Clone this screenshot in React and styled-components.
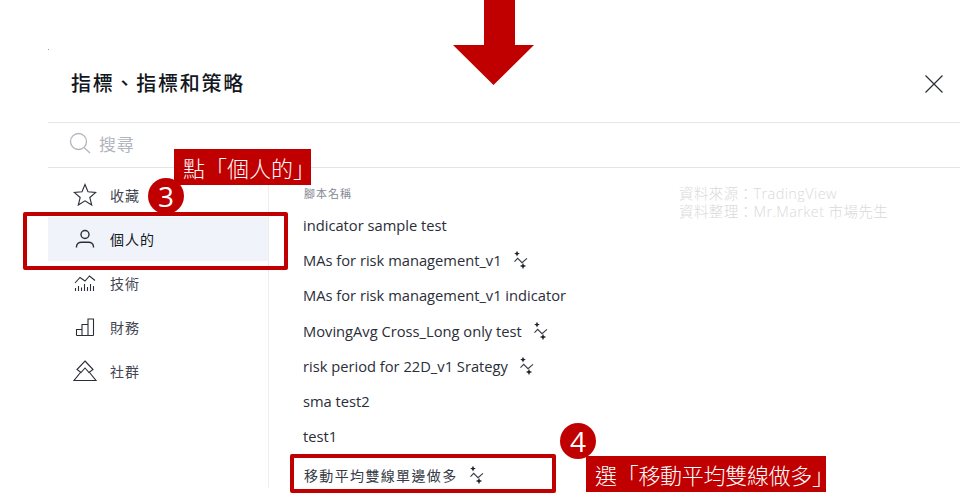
import React from "react";
import styled, { createGlobalStyle } from "styled-components";

const Global = createGlobalStyle`
  html, body { margin: 0; padding: 0; background: #fff; }
  #root { width: 960px; height: 502px; overflow: hidden; }
`;

const CJK = `"Noto Sans CJK TC", "Noto Sans", sans-serif`;
const RED = "#c00000";

const Page = styled.div`
  position: relative;
  width: 960px;
  height: 502px;
  background: #fff;
  padding: 50px 0 14px 48px;
  box-sizing: border-box;
  overflow: hidden;
  font-family: ${CJK};
`;
const Dialog = styled.div`
  height: 100%;
  display: flex;
  flex-direction: column;
`;
const Header = styled.header`
  flex: 0 0 73px;
  box-sizing: border-box;
  border-bottom: 1px solid #e3e5ea;
  display: flex;
  align-items: center;
  justify-content: space-between;
  padding: 0 16px 7px 23px;
`;
const Title = styled.h1`
  margin: 0;
  font: 500 20px ${CJK};
  letter-spacing: 1.75px;
  color: #131722;
`;
const Close = styled.svg`
  width: 20px;
  height: 20px;
  display: block;
  margin-top: 3px;
`;
const SearchBar = styled.div`
  flex: 0 0 45px;
  box-sizing: border-box;
  border-bottom: 1px solid #e3e5ea;
  display: flex;
  align-items: center;
  gap: 8px;
  padding: 0 0 4px 21px;
`;
const SearchText = styled.span`
  font: 400 17px ${CJK};
  letter-spacing: 0.7px;
  color: #b2b5be;
`;
const Body = styled.div`
  flex: 1;
  display: flex;
  min-height: 0;
`;
const Sidebar = styled.nav`
  flex: 0 0 221px;
  box-sizing: border-box;
  border-right: 1px solid #eceef2;
  padding-top: 5px;
`;
const NavItem = styled.div`
  height: 44px;
  display: flex;
  align-items: center;
  gap: 13px;
  padding-left: 25px;
  background: ${(p) => (p.$active ? "#f0f3fa" : "transparent")};
  color: ${(p) => (p.$active ? "#131722" : "#434651")};
  font: 400 14px ${CJK};
  letter-spacing: 1px;
`;
const NavIcon = styled.svg`
  width: 24px;
  height: 24px;
  flex: none;
  fill: none;
  stroke: #2a2e39;
  stroke-width: 1.1;
`;
const List = styled.section`
  flex: 1;
  padding: 17px 0 0 34px;
`;
const ListHead = styled.div`
  height: 22px;
  font: 400 11px ${CJK};
  letter-spacing: 1px;
  color: #868993;
  margin-left: 1px;
`;
const Row = styled.div`
  height: 35.3px;
  display: flex;
  align-items: center;
  gap: 11px;
  font: 400 14.7px "Open Sans", ${CJK};
  color: #2a2e39;
`;
const CjkRow = styled(Row)`
  margin-top: 3.5px;
  margin-left: 1px;
  font: 400 14px ${CJK};
  letter-spacing: 1.35px;
  color: #363a45;
`;
const Spark = styled.svg`
  width: 16px;
  height: 20px;
  flex: none;
`;
const Watermark = styled.div`
  position: absolute;
  left: 679px;
  top: 185px;
  color: #dadada;
`;
const WatermarkLine = styled.div`
  height: 17.5px;
  font: 300 14.5px/17.5px "Open Sans", "Noto Sans CJK TC", sans-serif;
  letter-spacing: 0.4px;
  white-space: nowrap;
`;
const Arrow = styled.svg`
  position: absolute;
  left: 453px;
  top: 0;
  width: 81px;
  height: 86px;
`;
const Label = styled.div`
  position: absolute;
  left: ${(p) => p.$x}px;
  top: ${(p) => p.$y}px;
  width: ${(p) => p.$w}px;
  height: 36px;
  box-sizing: border-box;
  padding-left: 9px;
  display: flex;
  align-items: center;
  background: ${RED};
  color: #fff;
  font: 300 22px "Noto Sans CJK TC", sans-serif;
  letter-spacing: ${(p) => p.$tight}px;
  white-space: nowrap;
`;
const Badge = styled.div`
  position: absolute;
  left: ${(p) => p.$x}px;
  top: ${(p) => p.$y}px;
  width: 36px;
  height: 36px;
  border-radius: 50%;
  background: ${RED};
  color: #fff;
  display: flex;
  align-items: center;
  justify-content: center;
  font: 400 28px "Open Sans", sans-serif;
`;
const Frame = styled.div`
  position: absolute;
  left: ${(p) => p.$x}px;
  top: ${(p) => p.$y}px;
  width: ${(p) => p.$w}px;
  height: ${(p) => p.$h}px;
  box-sizing: border-box;
  border: 4px solid ${RED};
  border-radius: 2px;
`;
const Speck = styled.i`
  position: absolute;
  left: 48px;
  top: 49px;
  width: 1px;
  height: 1px;
  background: #9a9a9a;
`;

const Sparkle = () => (
  <Spark viewBox="0 0 16 20">
    <path d="M4 .8 4.900 2.700 6.800 3.600 4.900 4.500 4 6.400 3.100 4.500 1.200 3.600 3.100 2.700Z" fill="#1e222d" />
    <path d="M1.500 11.700 4.700 8.300 9 12.700 14 8.300" fill="none" stroke="#363a45" strokeWidth="1.1" />
    <path d="M10 12.800 10.900 15.100 13.200 16 10.900 16.900 10 19.200 9.100 16.900 6.800 16 9.100 15.100Z" fill="#1e222d" />
  </Spark>
);

const icons = {
  star: <path d="M12 1.500 15 8.800 22.800 9.400 16.800 14.500 18.700 22 12 17.900 5.300 22 7.200 14.500 1.200 9.400 9 8.800Z" />,
  user: (
    <>
      <circle cx="12" cy="7.500" r="4" strokeWidth="1.4" />
      <path d="M3.500 20.500v-.8c0-2.800 2.500-4.500 5-4.500h7c2.500 0 5 1.700 5 4.500v.8" strokeWidth="1.4" />
    </>
  ),
  tech: (
    <path d="M2 12 7 6.500 12 10 16.500 5 22 9.500M2.500 20v-3M5.500 20v-5M8.500 20v-3.500M11.500 20v-7M14.500 20v-4M17.500 20v-7M20.500 20v-5" />
  ),
  fin: <path d="M3.500 20.500h17M3.500 20.500v-6h5.500v6M9 20.500V9.500h6v11M15 20.500V4h5.500v16.500" />,
  social: (
    <path d="M12 2 20 10.500 16 13.500 12 9 8 13.500 4 10.500ZM7.500 13.500 1 21.500h22L16.500 13.500" />
  ),
};

const nav = [
  ["star", "收藏"],
  ["user", "個人的", true],
  ["tech", "技術"],
  ["fin", "財務"],
  ["social", "社群"],
];
const rows = [
  ["indicator sample test"],
  ["MAs for risk management_v1", true],
  ["MAs for risk management_v1 indicator"],
  ["MovingAvg Cross_Long only test", true],
  ["risk period for 22D_v1 Srategy", true],
  ["sma test2"],
  ["test1"],
];

export default function App() {
  return (
    <Page>
      <Global />
      <Dialog>
        <Header>
          <Title>指標、指標和策略</Title>
          <Close viewBox="0 0 20 20">
            <path d="M1.500 1.500 18.500 18.500M18.500 1.500 1.500 18.500" stroke="#2a2e39" strokeWidth="1.2" fill="none" />
          </Close>
        </Header>
        <SearchBar>
          <svg width="22" height="22" viewBox="0 0 22 22" fill="none" stroke="#b2b5be" strokeWidth="1.300">
            <circle cx="9.500" cy="9.500" r="8" />
            <path d="M15 15.500 21 21" />
          </svg>
          <SearchText>搜尋</SearchText>
        </SearchBar>
        <Body>
          <Sidebar>
            {nav.map(([icon, text, active]) => (
              <NavItem key={text} $active={active}>
                <NavIcon viewBox="0 0 24 24">{icons[icon]}</NavIcon>
                {text}
              </NavItem>
            ))}
          </Sidebar>
          <List>
            <ListHead>腳本名稱</ListHead>
            {rows.map(([text, spark]) => (
              <Row key={text}>
                {text}
                {spark && <Sparkle />}
              </Row>
            ))}
            <CjkRow>
              移動平均雙線單邊做多
              <Sparkle />
            </CjkRow>
          </List>
        </Body>
      </Dialog>

      <Speck />
      <Watermark>
        <WatermarkLine>資料來源：TradingView</WatermarkLine>
        <WatermarkLine>資料整理：Mr.Market 市場先生</WatermarkLine>
      </Watermark>
      <Arrow viewBox="0 0 81 86">
        <path d="M31 0h31v45h19L40.500 85 0 45h31Z" fill={RED} />
      </Arrow>
      <Frame $x={23} $y={212} $w={265} $h={58} />
      <Frame $x={290} $y={454} $w={266} $h={39} />
      <Label $x={174} $y={149} $w={137} $tight={0}>點「個人的」</Label>
      <Badge $x={148} $y={178}>3</Badge>
      <Badge $x={560} $y={423}>4</Badge>
      <Label $x={586} $y={456} $w={240} $tight={-0.3}>選「移動平均雙線做多」</Label>
    </Page>
  );
}
